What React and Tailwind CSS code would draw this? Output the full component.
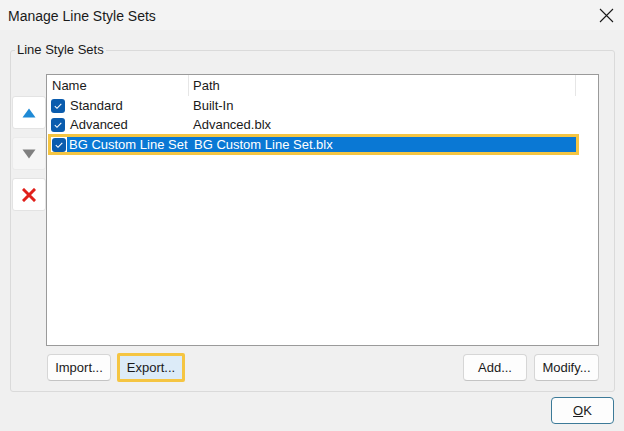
import React from "react";

function Check() {
  return (
    <div className="w-[14px] h-[14px] rounded-[3px] bg-[#0a5cae] flex items-center justify-center shrink-0">
      <svg width="10" height="10" viewBox="0 0 10 10">
        <path d="M1.8 5.2 L4 7.3 L8.3 2.8" fill="none" stroke="#fff" strokeWidth="1.1" />
      </svg>
    </div>
  );
}

function Btn({ children, className = "" }) {
  return (
    <div
      className={
        "h-[27px] flex items-center justify-center rounded-[4px] border border-[#d6d6d6] border-b-[#c4c4c4] bg-[#fdfdfd] text-[13px] text-[#1a1a1a] " +
        className
      }
    >
      {children}
    </div>
  );
}

export default function App() {
  const font = { fontFamily: '"Liberation Sans", Arial, sans-serif' };
  return (
    <div className="w-[624px] h-[431px] bg-[#f0f0f0] flex flex-col overflow-hidden" style={font}>
      {/* Title bar */}
      <div className="h-[30px] bg-[#f3f3f3] flex items-center justify-between pl-[8px] pr-[10px]">
        <span className="text-[14px] text-[#1a1a1a] pt-[2px]">Manage Line Style Sets</span>
        <svg width="15" height="15" viewBox="0 0 15 15">
          <path d="M1 1 L14 14 M14 1 L1 14" stroke="#1a1a1a" strokeWidth="1.1" />
        </svg>
      </div>

      {/* Group box */}
      <div className="relative mt-[20px] ml-[10px] w-[605px] h-[342px] border border-[#dadada] rounded-[3px] flex flex-col">
        <span className="absolute -top-[10px] left-[4px] px-[2px] bg-[#f0f0f0] text-[13px] text-[#1a1a1a] leading-[18px]">
          Line Style Sets
        </span>
        <div className="flex pt-[23px] pl-[1px]">
          {/* side buttons */}
          <div className="w-[34px] pt-[22px] flex flex-col gap-[8px]">
            <div className="h-[33px] bg-white border border-[#e3e3e3] rounded-[3px] flex items-center justify-center">
              <svg width="14" height="10" viewBox="0 0 14 10">
                <path d="M7 0.5 L13.5 9.5 L0.5 9.5 Z" fill="#1f8ad6" />
              </svg>
            </div>
            <div className="h-[33px] bg-[#f6f6f6] border border-[#ebebeb] rounded-[3px] flex items-center justify-center">
              <svg width="14" height="10" viewBox="0 0 14 10">
                <path d="M0.5 0.5 L13.5 0.5 L7 9.5 Z" fill="#808080" />
              </svg>
            </div>
            <div className="h-[33px] bg-white border border-[#e3e3e3] rounded-[3px] flex items-center justify-center">
              <svg width="14" height="14" viewBox="0 0 14 14">
                <path d="M2 2 L12 12 M12 2 L2 12" stroke="#e0201b" strokeWidth="3" strokeLinecap="square" />
              </svg>
            </div>
          </div>

          {/* list */}
          <div className="w-[553px] h-[272px] bg-white border border-[#9a9a9a] text-[13px] text-[#1a1a1a] flex flex-col">
            <div className="h-[21px] flex items-center">
              <div className="w-[142px] h-full flex items-center pl-[5px] border-r border-[#e6e6e6]">Name</div>
              <div className="w-[387px] h-full flex items-center pl-[4px] border-r border-[#e6e6e6]">Path</div>
            </div>
            <div className="h-[19px] flex items-center pl-[4px]">
              <Check />
              <span className="w-[124px] pl-[5px]">Standard</span>
              <span className="pl-[4px]">Built-In</span>
            </div>
            <div className="h-[19px] flex items-center pl-[4px]">
              <Check />
              <span className="w-[124px] pl-[5px]">Advanced</span>
              <span className="pl-[4px]">Advanced.blx</span>
            </div>
            <div className="h-[21px] ml-[1px] w-[531px] border-[3px] border-[#f5c542] flex items-center">
              <div className="pl-[1px] pr-[1px]">
                <Check />
              </div>
              <div className="flex-1 h-full bg-[#0a78d4] text-white flex items-center">
                <span className="w-[123px] pl-[2px]">BG Custom Line Set</span>
                <span className="pl-[4px]">BG Custom Line Set.blx</span>
              </div>
            </div>
          </div>
        </div>

        {/* bottom buttons */}
        <div className="flex items-center mt-[7px] pl-[36px]">
          <Btn className="w-[64px]">Import...</Btn>
          <div className="ml-[6px] border-[3px] border-[#f5c542] rounded-[2px]">
            <div className="w-[62px] h-[23px] bg-[#dcebf8] flex items-center justify-center text-[13px] text-[#1a1a1a]">
              Export...
            </div>
          </div>
          <div className="flex-1" />
          <Btn className="w-[64px]">Add...</Btn>
          <Btn className="w-[65px] ml-[7px] mr-[15px]">Modify...</Btn>
        </div>
      </div>

      {/* OK */}
      <div className="flex justify-end pr-[10px] mt-[5px]">
        <div className="w-[63px] h-[27px] rounded-[4px] border border-[#3c7a98] bg-[#fdfdfd] flex items-center justify-center text-[13px] text-[#1a1a1a]">
          <span>
            <span className="underline">O</span>K
          </span>
        </div>
      </div>
    </div>
  );
}
